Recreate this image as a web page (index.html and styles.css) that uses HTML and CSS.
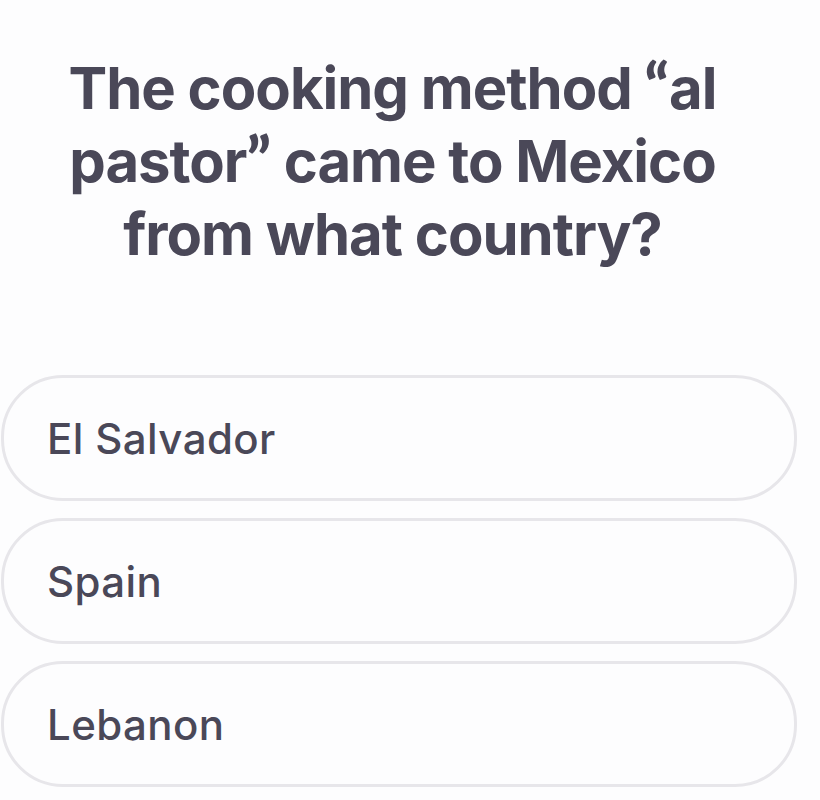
FILE: index.html
```html
<!DOCTYPE html>
<html>
<head>
<meta charset="utf-8">
<link rel="stylesheet" href="styles.css">
</head>
<body>
<div class="quiz">
  <h1 class="question">The cooking method <span class="quote">“</span>al pastor<span class="quote">”</span> came to Mexico from what country?</h1>
  <div class="answers">
    <div class="answer">El Salvador</div>
    <div class="answer">Spain</div>
    <div class="answer">Lebanon</div>
  </div>
</div>
</body>
</html>
```
FILE: styles.css
```css
html, body {
  margin: 0;
  padding: 0;
  background: #fdfdfe;
}
body {
  font-family: "Inter", "Noto Sans", sans-serif;
  color: #4a4858;
}
.quiz {
  width: 797px;
  padding-top: 52px;
}
.question {
  margin: 0;
  padding: 0 70px 0 58px;
  text-align: center;
  font-size: 58px;
  line-height: 73px;
  font-weight: 700;
  letter-spacing: -1px;
}
.quote {
  font-family: "Lato", "Noto Sans", sans-serif;
  font-weight: 900;
  font-size: 62px;
  line-height: 0;
  letter-spacing: 0;
}
.answers {
  margin-top: 104px;
  display: flex;
  flex-direction: column;
  gap: 17px;
  padding-left: 1px;
}
.answer {
  box-sizing: border-box;
  height: 126px;
  border: 3px solid #e7e6ea;
  border-radius: 62px;
  display: flex;
  align-items: center;
  padding-left: 43px;
  font-size: 42px;
  font-weight: 500;
  letter-spacing: 0.4px;
}
```
